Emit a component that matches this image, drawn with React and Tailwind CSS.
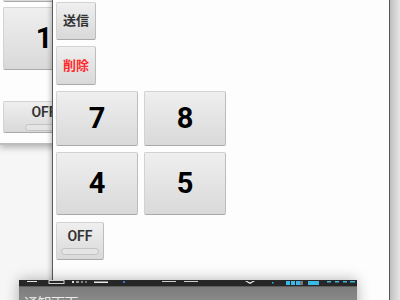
import React from "react";

const font = { fontFamily: '"Roboto", "Noto Sans CJK JP", "Liberation Sans", sans-serif' };

function Btn({ className = "", children }) {
  return (
    <div
      className={
        "flex items-center justify-center rounded-[2px] border border-[#d2d2d2] border-b-[#a9a9a9] border-r-[#bdbdbd] bg-gradient-to-b from-[#efefef] to-[#d9d9d9] " +
        className
      }
    >
      {children}
    </div>
  );
}

function Toggle({ className = "", barClass = "" }) {
  return (
    <Btn className={"flex-col " + className}>
      <span className="text-[14px] font-semibold leading-none text-[#333] mt-[2px]">OFF</span>
      <span className={"mt-[5px] h-[7px] rounded-full border border-[#c4c4c4] bg-[#e4e4e4] " + barClass} />
    </Btn>
  );
}

export default function App() {
  return (
    <div className="relative w-[400px] h-[300px] overflow-hidden bg-[#f6f6f6]" style={font}>
      {/* window at far right, behind */}
      <div className="absolute left-[389px] top-0 w-[11px] h-[300px] bg-gradient-to-r from-[#bdbdbd] to-[#e6e6e6]" />

      {/* back window */}
      <div className="absolute left-0 top-0 w-[200px] h-[145px] bg-[#fcfdfc] border-b-2 border-[#bdbdbd] shadow-[0_3px_6px_rgba(0,0,0,0.25)] flex flex-col pl-[3px]">
        <div className="mt-[-30px] w-[82px] h-[32px] rounded-[2px] border border-[#d2d2d2] border-b-[#a9a9a9] bg-gradient-to-b from-[#efefef] to-[#d9d9d9]" />
        <Btn className="mt-[5px] w-[82px] h-[63px]">
          <span className="text-[29px] font-bold text-black">1</span>
        </Btn>
        <Toggle className="mt-[31px] w-[82px] h-[32px]" barClass="w-[38px]" />
      </div>

      {/* front window */}
      <div className="absolute left-[52px] top-0 w-[338px] h-[300px] bg-[#fcfdfc] border-l border-r border-l-[#5a5a5a] border-r-[#555] shadow-[-2px_0_4px_rgba(0,0,0,0.2)] flex flex-col pl-[3px] pt-[2px]">
        <Btn className="w-[40px] h-[38px]">
          <span className="text-[13px] font-bold text-[#333]">送信</span>
        </Btn>
        <Btn className="mt-[6px] w-[40px] h-[39px]">
          <span className="text-[13px] font-bold text-[#ff2b2b]">削除</span>
        </Btn>
        <div className="mt-[6px] flex gap-[6px]">
          <Btn className="w-[82px] h-[55px]">
            <span className="text-[29px] font-bold text-black">7</span>
          </Btn>
          <Btn className="w-[82px] h-[55px]">
            <span className="text-[29px] font-bold text-black">8</span>
          </Btn>
        </div>
        <div className="mt-[6px] flex gap-[6px]">
          <Btn className="w-[82px] h-[63px]">
            <span className="text-[29px] font-bold text-black">4</span>
          </Btn>
          <Btn className="w-[82px] h-[63px]">
            <span className="text-[29px] font-bold text-black">5</span>
          </Btn>
        </div>
        <Toggle className="mt-[7px] w-[48px] h-[38px]" barClass="w-[38px]" />
      </div>

      {/* notification window */}
      <div className="absolute left-[19px] top-[280px] w-[338px] h-[40px] shadow-[0_0_14px_rgba(0,0,0,0.3)] flex flex-col">
        <div className="h-[6px] bg-[#272727]">
          <svg width="338" height="6" viewBox="0 0 338 6">
            <rect x="8" y="1" width="10" height="1" fill="#e8e8e8" />
            <rect x="30" y="0.5" width="15" height="3" fill="none" stroke="#cfcfcf" strokeWidth="1" />
            <rect x="53" y="1" width="2" height="2" fill="#ddd" />
            <rect x="57" y="1" width="3" height="2" fill="#999" />
            <rect x="62" y="1" width="2" height="2" fill="#888" />
            <rect x="66" y="1" width="2" height="2" fill="#777" />
            <rect x="75" y="1.5" width="14" height="1.5" fill="#e8e8e8" />
            <rect x="104" y="1" width="2" height="2" fill="#2a7ad8" />
            <rect x="143" y="1" width="14" height="1" fill="#cfcfcf" />
            <rect x="165" y="1" width="14" height="1" fill="#cfcfcf" />
            <path d="M226 1 L231 4 L236 1 L234 1 L231 2.5 L228 1 Z" fill="#f2f2f2" />
            <rect x="253" y="2" width="1.5" height="1.5" fill="#3ab0e0" />
            <rect x="267" y="1" width="4" height="4" fill="#3ab8e6" />
            <rect x="272" y="1" width="4" height="4" fill="#3ab8e6" />
            <rect x="277" y="1" width="4" height="4" fill="#3ab8e6" />
            <rect x="281" y="1" width="3" height="4" fill="#777" />
            <rect x="289" y="1" width="11" height="4" fill="#3ab8e6" />
            <rect x="308" y="1" width="4" height="1.5" fill="#3ab8e6" />
            <rect x="316" y="1" width="4" height="1.5" fill="#3ab8e6" />
            <rect x="324" y="1" width="4" height="1.5" fill="#3ab8e6" />
            <rect x="331" y="1" width="5" height="1.5" fill="#3ab8e6" />
          </svg>
        </div>
        <div className="flex-1 bg-gradient-to-b from-[#7c7c7c] to-[#9c9c9c] border-t border-[#5e5e5e] pl-[5px] pt-[4px]">
          <span className="text-[14px] leading-none text-[#ececec] tracking-[-0.5px]">通知画面</span>
        </div>
      </div>
    </div>
  );
}
